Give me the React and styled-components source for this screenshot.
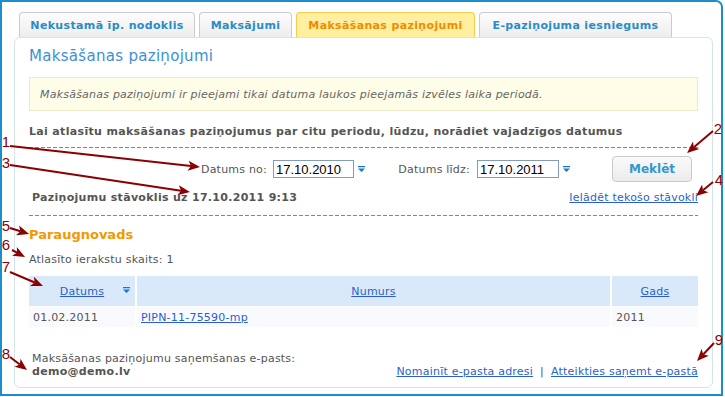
import styled, { createGlobalStyle } from "styled-components";

const GlobalStyle = createGlobalStyle`
  html, body {
    margin: 0;
    padding: 0;
    background: #fff;
  }

  body {
    font-family: "DejaVu Sans", Verdana, sans-serif;
    font-size: 11px;
    letter-spacing: 0.22px;
    color: #555;
  }
`;

const Page = styled.div`
  position: relative;
  width: 725px;
  height: 397px;
  overflow: hidden;
`;

const Frame = styled.div`
  box-sizing: border-box;
  width: 723px;
  height: 396px;
  border: 2px solid #1b8fcb;
  border-top-right-radius: 7px;
  padding: 10px 0 0 12px;
`;

const Tabs = styled.div`
  display: flex;
  gap: 4px;
  margin-left: 5px;
`;

const Tab = styled.div`
  box-sizing: border-box;
  width: ${(p) => p.$w}px;
  height: 25px;
  display: flex;
  align-items: center;
  justify-content: center;
  border: 1px solid ${(p) => (p.$active ? "#f3cd4f" : "#cbcbcb")};
  border-bottom: none;
  border-radius: 4px 4px 0 0;
  background: ${(p) =>
    p.$active ? "#ffef9f" : "linear-gradient(#fdfdfd, #ededed)"};
  color: ${(p) => (p.$active ? "#f08c00" : "#2a8cc6")};
  font-weight: bold;
  letter-spacing: 0.35px;
  white-space: nowrap;
`;

const Panel = styled.div`
  box-sizing: border-box;
  width: 699px;
  height: 351px;
  border: 1px solid #d5e4eb;
  border-radius: 6px;
  padding: 9px 14px 0 14px;
  display: flex;
  flex-direction: column;
`;

const Title = styled.h1`
  margin: 0;
  font-size: 15px;
  line-height: 18px;
  font-weight: normal;
  letter-spacing: 0.3px;
  color: #3d8fd6;
`;

const InfoBox = styled.div`
  box-sizing: border-box;
  height: 34px;
  margin-top: 12px;
  padding: 0 10px;
  display: flex;
  align-items: center;
  background: #fefde8;
  border: 1px solid #efeac6;
  font-style: italic;
  letter-spacing: 0.22px;
  color: #666;
`;

const Hint = styled.div`
  margin-top: 13px;
  line-height: 15px;
  font-weight: bold;
  letter-spacing: 0.33px;
  color: #555;
`;

const Divider = styled.div`
  height: 1px;
  margin-top: ${(p) => p.$top}px;
  background: repeating-linear-gradient(
    to right,
    #4b93d3 0 4px,
    transparent 4px 6px
  );
`;

const DateRow = styled.div`
  margin-top: 8px;
  display: flex;
  align-items: center;
`;

const DateLabel = styled.label`
  width: ${(p) => p.$w}px;
  margin-right: ${(p) => p.$gap}px;
  text-align: right;
  color: #555;
`;

const DateInput = styled.input`
  box-sizing: border-box;
  width: ${(p) => p.$w}px;
  height: 18px;
  margin: 0;
  padding: 0 2px;
  border: 1px solid #7f9db9;
  font: 13px "Liberation Sans", Arial, sans-serif;
  letter-spacing: 0;
  color: #000;
  outline: none;
`;

const PickerIcon = styled.span`
  width: 8px;
  margin-left: 4px;
  display: flex;
  align-items: center;
`;

const Button = styled.button`
  box-sizing: border-box;
  width: 80px;
  height: 26px;
  margin-left: auto;
  margin-right: 6px;
  border: 1px solid #cacaca;
  border-radius: 4px;
  background: linear-gradient(#fafafa, #ececec);
  color: #3399cc;
  font: bold 12px "DejaVu Sans", Verdana, sans-serif;
  cursor: pointer;
`;

const StatusRow = styled.div`
  margin-top: 8px;
  line-height: 15px;
  display: flex;
  justify-content: space-between;
  padding-left: 3px;
`;

const Status = styled.span`
  font-weight: bold;
  letter-spacing: 0.3px;
`;

const Link = styled.a`
  color: #2a5fcf;
  text-decoration: underline;
  cursor: pointer;
`;

const Region = styled.h2`
  margin: 10px 0 0;
  font-size: 13px;
  line-height: 17px;
  letter-spacing: 0;
  color: #f39800;
`;

const Count = styled.div`
  margin-top: 9px;
  line-height: 15px;
`;

const Grid = styled.div`
  margin-top: 9px;
  display: grid;
  grid-template-columns: 106px 1fr 86px;
  column-gap: 2px;
  row-gap: 1px;
`;

const HeadCell = styled.div`
  position: relative;
  height: 30px;
  display: flex;
  align-items: center;
  justify-content: center;
  background: #d9e9f9;
`;

const SortIcon = styled.span`
  position: absolute;
  right: 5px;
  top: 11px;
  display: flex;
`;

const Cell = styled.div`
  height: 20px;
  padding-left: 4px;
  display: flex;
  align-items: center;
  background: #f9fafd;
`;

const Footer = styled.div`
  margin-top: 25px;
  display: flex;
  justify-content: space-between;
  align-items: flex-end;
  line-height: 13px;
`;

const Email = styled.div`
  padding-left: 3px;
`;

const Strong = styled.div`
  font-weight: bold;
  letter-spacing: 0.3px;
`;

const Separator = styled.span`
  margin: 0 7px;
  color: #555;
`;

const Overlay = styled.svg`
  position: absolute;
  top: 0;
  left: 0;
  pointer-events: none;
`;

function Chevrons() {
  return (
    <svg width="7" height="7" viewBox="0 0 7 7">
      <path d="M0 0h7v1.2H0z M0 2.4h7L3.5 6z" fill="#1a76d2" />
    </svg>
  );
}

const notes = [
  { n: "1", nx: 6, ny: 141, x1: 10, y1: 146, x2: 200, y2: 167 },
  { n: "2", nx: 718, ny: 128, x1: 713, y1: 131, x2: 687, y2: 153 },
  { n: "3", nx: 6, ny: 162, x1: 10, y1: 165, x2: 190, y2: 192 },
  { n: "4", nx: 719, ny: 179, x1: 713, y1: 182, x2: 696, y2: 196 },
  { n: "5", nx: 6, ny: 225, x1: 10, y1: 228, x2: 29, y2: 234 },
  { n: "6", nx: 6, ny: 244, x1: 12, y1: 250, x2: 25, y2: 257 },
  { n: "7", nx: 6, ny: 266, x1: 10, y1: 272, x2: 43, y2: 286 },
  { n: "8", nx: 6, ny: 353, x1: 10, y1: 357, x2: 27, y2: 370 },
  { n: "9", nx: 719, ny: 339, x1: 714, y1: 343, x2: 697, y2: 361 },
];

function Note({ n, nx, ny, x1, y1, x2, y2 }) {
  const dx = x2 - x1;
  const dy = y2 - y1;
  const len = Math.hypot(dx, dy);
  const ux = dx / len;
  const uy = dy / len;
  const hl = 12;
  const hw = 5;
  const bx = x2 - ux * hl;
  const by = y2 - uy * hl;
  const nxp = bx + ux * 3;
  const nyp = by + uy * 3;
  const pts = [
    [x2, y2],
    [bx - uy * hw, by + ux * hw],
    [nxp, nyp],
    [bx + uy * hw, by - ux * hw],
  ]
    .map((p) => p.join(","))
    .join(" ");

  return (
    <g>
      <text
        x={nx}
        y={ny}
        textAnchor="middle"
        dominantBaseline="central"
        fontFamily='"Liberation Sans", Arial, sans-serif'
        fontSize="15"
        fill="#8b0000"
      >
        {n}
      </text>
      <line
        x1={x1}
        y1={y1}
        x2={nxp}
        y2={nyp}
        stroke="#8b0000"
        strokeWidth="2"
      />
      <polygon points={pts} fill="#8b0000" />
    </g>
  );
}

function App() {
  return (
    <Page>
      <GlobalStyle />
      <Frame>
        <Tabs>
          <Tab $w={176}>Nekustamā īp. nodoklis</Tab>
          <Tab $w={93}>Maksājumi</Tab>
          <Tab $w={179} $active>
            Maksāšanas paziņojumi
          </Tab>
          <Tab $w={193}>E-paziņojuma iesniegums</Tab>
        </Tabs>

        <Panel>
          <Title>Maksāšanas paziņojumi</Title>

          <InfoBox>
            Maksāšanas paziņojumi ir pieejami tikai datuma laukos pieejamās
            izvēles laika periodā.
          </InfoBox>

          <Hint>
            Lai atlasītu maksāšanas paziņojumus par citu periodu, lūdzu,
            norādiet vajadzīgos datumus
          </Hint>
          <Divider $top={8} />

          <DateRow>
            <DateLabel $w={238} $gap={6}>
              Datums no:
            </DateLabel>
            <DateInput $w={81} defaultValue="17.10.2010" />
            <PickerIcon>
              <Chevrons />
            </PickerIcon>
            <DateLabel $w={104} $gap={7}>
              Datums līdz:
            </DateLabel>
            <DateInput $w={82} defaultValue="17.10.2011" />
            <PickerIcon>
              <Chevrons />
            </PickerIcon>
            <Button>Meklēt</Button>
          </DateRow>

          <StatusRow>
            <Status>Paziņojumu stāvoklis uz 17.10.2011 9:13</Status>
            <Link>Ielādēt tekošo stāvokli</Link>
          </StatusRow>
          <Divider $top={10} />

          <Region>Paraugnovads</Region>
          <Count>Atlasīto ierakstu skaits: 1</Count>

          <Grid>
            <HeadCell>
              <Link>Datums</Link>
              <SortIcon>
                <Chevrons />
              </SortIcon>
            </HeadCell>
            <HeadCell>
              <Link>Numurs</Link>
            </HeadCell>
            <HeadCell>
              <Link>Gads</Link>
            </HeadCell>

            <Cell>01.02.2011</Cell>
            <Cell>
              <Link>PIPN-11-75590-mp</Link>
            </Cell>
            <Cell>2011</Cell>
          </Grid>

          <Footer>
            <Email>
              <div>Maksāšanas paziņojumu saņemšanas e-pasts:</div>
              <Strong>demo@demo.lv</Strong>
            </Email>
            <div>
              <Link>Nomainīt e-pasta adresi</Link>
              <Separator>|</Separator>
              <Link>Atteikties saņemt e-pastā</Link>
            </div>
          </Footer>
        </Panel>
      </Frame>

      <Overlay width="725" height="397" viewBox="0 0 725 397">
        {notes.map((note) => (
          <Note key={note.n} {...note} />
        ))}
      </Overlay>
    </Page>
  );
}

export default App;
